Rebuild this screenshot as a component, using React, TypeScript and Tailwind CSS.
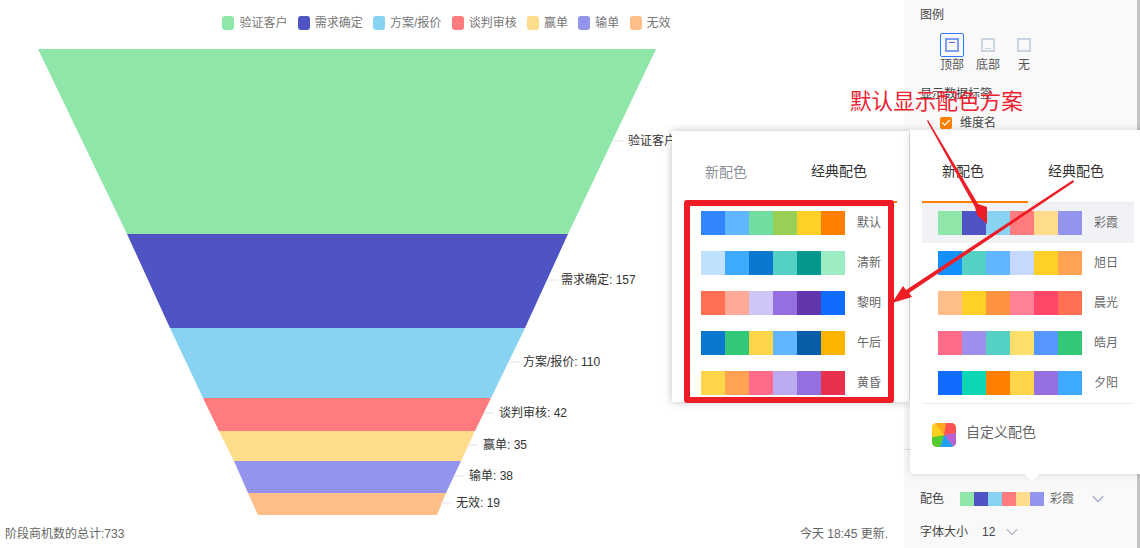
import { Check, ChevronDown } from 'lucide-react';

const FONT = "font-['Liberation_Sans','Noto_Sans_CJK_SC',sans-serif]";

const legend = [
  { name: '验证客户', color: '#8ee6a8' },
  { name: '需求确定', color: '#5053c4' },
  { name: '方案/报价', color: '#89d3f2' },
  { name: '谈判审核', color: '#ff7b7d' },
  { name: '赢单', color: '#ffdb8c' },
  { name: '输单', color: '#9394ee' },
  { name: '无效', color: '#ffbd88' },
];

const funnel = [
  { color: '#8ee6a8', points: '38,49 656,49 568,234 127,234' },
  { color: '#5053c4', points: '127,234 568,234 525,328 170,328' },
  { color: '#89d3f2', points: '170,328 525,328 491,398 203,398' },
  { color: '#ff7b7d', points: '203,398 491,398 475,431 219,431' },
  { color: '#ffdb8c', points: '219,431 475,431 461,461 234,461' },
  { color: '#9394ee', points: '234,461 461,461 446,493 248,493' },
  { color: '#ffbd88', points: '248,493 446,493 437,515 258,515' },
];

const leaders = [
  [612, 141, 624, 141],
  [548, 280, 558, 280],
  [508, 362, 520, 362],
  [484, 413, 494, 413],
  [468, 445, 478, 445],
  [454, 476, 464, 476],
  [441, 503, 451, 503],
];

const labels = [
  { text: '验证客户', top: 132, left: 628 },
  { text: '需求确定: 157', top: 271, left: 561 },
  { text: '方案/报价: 110', top: 353, left: 523 },
  { text: '谈判审核: 42', top: 404, left: 499 },
  { text: '赢单: 35', top: 436, left: 483 },
  { text: '输单: 38', top: 467, left: 469 },
  { text: '无效: 19', top: 494, left: 456 },
];

const classic = [
  { name: '默认', colors: ['#3385ff', '#60b7ff', '#72dda0', '#98d057', '#ffd025', '#ff8000'] },
  { name: '清新', colors: ['#bfe1fd', '#3daafc', '#0a78cf', '#55d0c5', '#03978e', '#9debc0'] },
  { name: '黎明', colors: ['#ff7152', '#ffa998', '#cfc6f7', '#936fe0', '#6237ad', '#0f6cff'] },
  { name: '午后', colors: ['#0a78cf', '#32c878', '#ffd64a', '#60b7ff', '#075ea6', '#ffb400'] },
  { name: '黄昏', colors: ['#ffd64a', '#ffa352', '#ff6b88', '#bcaaf0', '#936fe0', '#e8304f'] },
];

const fresh = [
  { name: '彩霞', colors: ['#8ee6a8', '#5053c4', '#89d3f2', '#ff7b7d', '#ffdb8c', '#9394ee'] },
  { name: '旭日', colors: ['#1290ff', '#55d0c5', '#60b7ff', '#c5d8fd', '#ffd025', '#ffa352'] },
  { name: '晨光', colors: ['#ffbd88', '#ffd025', '#ff9340', '#ff8097', '#ff4568', '#ff7152'] },
  { name: '皓月', colors: ['#ff6b88', '#9f8eec', '#55d0c5', '#ffdf6b', '#5696ff', '#32c878'] },
  { name: '夕阳', colors: ['#0f6cff', '#0dd6b5', '#ff8000', '#ffd64a', '#936fe0', '#3daaff'] },
];

function Swatches({ colors }: { colors: string[] }) {
  return (
    <div className="flex">
      {colors.map((c, i) => (
        <div key={i} className="w-6 h-6" style={{ backgroundColor: c }} />
      ))}
    </div>
  );
}

function Tabs({ active, muted }: { active: 0 | 1; muted?: number }) {
  return (
    <div className="flex h-full border-b border-[#e9e9ee]">
      {['新配色', '经典配色'].map((t, i) => (
        <div
          key={t}
          className={`w-1/2 flex items-center pl-5 pt-[10px] text-sm ${
            i === active ? 'border-b-2 border-[#ff8000] -mb-px' : ''
          } ${i === muted ? 'text-[#8b8f98]' : 'text-[#333]'}`}
        >
          {t}
        </div>
      ))}
    </div>
  );
}

function PaletteRows({ rows, selected }: { rows: typeof classic; selected?: number }) {
  return (
    <div>
      {rows.map((r, i) => (
        <div
          key={r.name}
          className={`flex items-center h-10 pl-4 ${i === selected ? 'bg-[#f1f2f6]' : ''}`}
        >
          <Swatches colors={r.colors} />
          <span className="ml-3 text-xs text-[#666]">{r.name}</span>
        </div>
      ))}
    </div>
  );
}

export default function App() {
  return (
    <div className={`${FONT} relative w-[1140px] h-[548px] overflow-hidden bg-white flex`}>
      {/* Chart */}
      <div className="relative w-[904px] h-full">
        <div className="flex justify-center gap-[10.3px] pt-[15px] w-[893px] text-xs text-[#777]">
          {legend.map((l) => (
            <div key={l.name} className="flex items-center gap-[5px]">
              <div className="w-3 h-[14px] rounded-[3px]" style={{ backgroundColor: l.color }} />
              <span>{l.name}</span>
            </div>
          ))}
        </div>

        <svg className="absolute left-0 top-0" width="904" height="548">
          {funnel.map((f) => (
            <polygon key={f.color} points={f.points} fill={f.color} />
          ))}
          {leaders.map(([x1, y1, x2, y2], i) => (
            <line key={i} x1={x1} y1={y1} x2={x2} y2={y2} stroke="#ececf2" strokeWidth="1.5" />
          ))}
        </svg>

        {labels.map((l) => (
          <span
            key={l.text}
            className="absolute text-xs leading-[18px] text-[#333] whitespace-nowrap"
            style={{ top: l.top, left: l.left }}
          >
            {l.text}
          </span>
        ))}

        <div className="absolute left-[5px] right-[16px] bottom-[6px] flex justify-between text-xs text-[#666]">
          <span>阶段商机数的总计:733</span>
          <span>今天 18:45 更新.</span>
        </div>
      </div>

      {/* Settings panel */}
      <div className="relative flex-1 bg-[#f9f9fa] text-xs text-[#444]">
        <div className="pl-4 pt-[7px]">图例</div>
        <div className="flex pl-[36px] pt-[10px] gap-3 text-[#555]">
          <div className="flex flex-col items-center">
            <div className="w-6 h-6 rounded-[2px] border border-[#2f7bff] flex items-center justify-center">
              <div className="w-[14px] h-[14px] border-2 border-[#7f9ff5] flex justify-center">
                <div className="w-[6px] h-px mt-[2px] bg-[#4a6fe0]" />
              </div>
            </div>
            <span className="whitespace-nowrap">顶部</span>
          </div>
          <div className="flex flex-col items-center">
            <div className="w-6 h-6 flex items-center justify-center">
              <div className="w-[14px] h-[14px] border-2 border-[#ccd3e0] flex justify-center items-end">
                <div className="w-[6px] h-px mb-[1px] bg-[#ccd3e0]" />
              </div>
            </div>
            <span className="whitespace-nowrap">底部</span>
          </div>
          <div className="flex flex-col items-center w-6">
            <div className="w-6 h-6 flex items-center justify-center">
              <div className="w-[14px] h-[14px] border-2 border-[#ccd3e0]" />
            </div>
            <span>无</span>
          </div>
        </div>
        <div className="pl-4 pt-[13px]">显示数据标签</div>
        <div className="flex items-center gap-2 pl-[36px] pt-[13px]">
          <div className="w-3 h-3 bg-[#ff8000] rounded-[2px] flex items-center justify-center">
            <Check size={10} color="white" strokeWidth={3} />
          </div>
          <span>维度名</span>
        </div>

        {/* divider mostly hidden by the popover */}
        <div className="absolute left-0 right-0 top-[449px] h-px bg-[#dcdcdf]" />

        <div className="absolute left-4 bottom-[8px] flex flex-col gap-[17px]">
          <div className="flex items-center h-4">
            <span className="w-10">配色</span>
            <div className="flex">
              {fresh[0].colors.map((c) => (
                <div key={c} className="w-[14px] h-[14px]" style={{ backgroundColor: c }} />
              ))}
            </div>
            <span className="ml-[6px] text-[#666]">彩霞</span>
            <ChevronDown size={20} strokeWidth={1.5} className="ml-[14px] text-[#9fb0c8]" />
          </div>
          <div className="flex items-center h-4">
            <span>字体大小</span>
            <span className="ml-[14px]">12</span>
            <ChevronDown size={20} strokeWidth={1.5} className="ml-[7px] text-[#b9bec8]" />
          </div>
        </div>
        {/* scrollbar */}
        <div className="absolute right-0 top-0 bottom-0 w-[3px] bg-[#c4c4c4]" />
      </div>

      {/* Classic palette popover */}
      <div className="absolute left-[672px] top-[131px] w-[237px] h-[271px] bg-white shadow-[0_0_8px_rgba(0,0,0,0.25)] overflow-hidden">
        <div className="ml-[13px] mr-3">
          <div className="h-[72px]">
            <Tabs active={1} muted={0} />
          </div>
          <PaletteRows rows={classic} />
        </div>
      </div>

      {/* New palette popover */}
      <div className="absolute left-[910px] top-[130px] w-[236px] h-[344px] bg-white rounded-bl shadow-[0_0_8px_rgba(0,0,0,0.15)]">
        <div className="mx-3">
          <div className="h-[73px]">
            <Tabs active={0} />
          </div>
          <PaletteRows rows={fresh} selected={0} />
          <div className="border-t border-[#e9e9ee] flex items-center h-[62px] pl-[10px] gap-[10px]">
            <svg width="24" height="24" viewBox="0 0 24 24">
              <defs>
                <clipPath id="logo-clip">
                  <rect width="24" height="24" rx="5" />
                </clipPath>
              </defs>
              <g clipPath="url(#logo-clip)">
                <rect width="24" height="24" fill="#ffa51f" />
                <path d="M12 12 L14 0 L24 0 L24 10 Z" fill="#ff5252" />
                <path d="M12 12 L24 10 L24 24 L22 24 Z" fill="#b95fd6" />
                <path d="M12 12 L22 24 L8 24 Z" fill="#1f9ff5" />
                <path d="M12 12 L8 24 L0 24 L0 14 Z" fill="#52cc2e" />
                <path d="M12 12 L0 14 L0 0 L3 0 Z" fill="#ffcf1f" />
              </g>
            </svg>
            <span className="text-sm text-[#666] -mt-[6px]">自定义配色</span>
          </div>
        </div>
        <div className="absolute left-[116px] -bottom-[5px] w-3 h-3 rotate-45 bg-white" />
      </div>

      {/* Annotation */}
      <div className="absolute left-[850px] top-[87px] text-[21.6px] leading-[30px] text-[#f0202f] whitespace-nowrap">
        默认显示配色方案
      </div>
      <div className="absolute left-[684px] top-[200px] w-[210px] h-[203px] border-[6px] border-[#ee1c25] rounded-[3px]" />
      <svg className="absolute left-0 top-0 pointer-events-none" width="1140" height="548">
        <polygon points="927,121 928,120 978,204 987,207 987,224 977,215 975,207" fill="#ee1c25" />
        <polygon points="1073,180 1074,182 909,293 912,297 892,303 903,286 906,290" fill="#ee1c25" />
      </svg>
    </div>
  );
}
